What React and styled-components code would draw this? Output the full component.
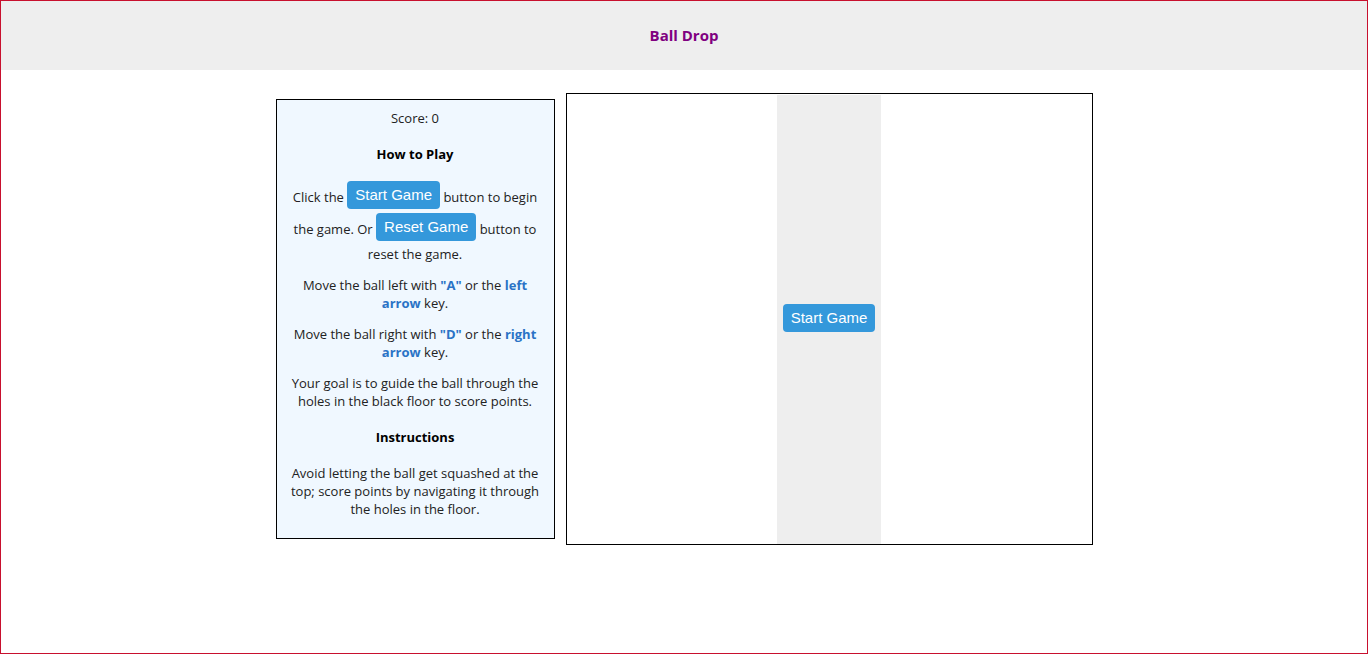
import styled, { createGlobalStyle } from "styled-components";

const GlobalStyle = createGlobalStyle`
  html, body {
    margin: 0;
    padding: 0;
    height: 100%;
  }
  body {
    font-family: "Open Sans", "Noto Sans", sans-serif;
    background: #fff;
  }
`;

function StartButton({ children }) {
  return <Button type="button">{children}</Button>;
}

function App() {
  return (
    <>
      <GlobalStyle />
      <Page>
        <Header>
          <Title>Ball Drop</Title>
        </Header>
        <Main>
          <Panel>
            <Score>Score: 0</Score>
            <Heading>How to Play</Heading>
            <Para>
              Click the <StartButton>Start Game</StartButton> button to begin
              the game. Or <StartButton>Reset Game</StartButton> button to
              reset the game.
            </Para>
            <Para>
              Move the ball left with <Key>"A"</Key> or the{" "}
              <Key>left arrow</Key> key.
            </Para>
            <Para>
              Move the ball right with <Key>"D"</Key> or the{" "}
              <Key>right arrow</Key> key.
            </Para>
            <Para>
              Your goal is to guide the ball through the holes in the black
              floor to score points.
            </Para>
            <Heading>Instructions</Heading>
            <Para>
              Avoid letting the ball get squashed at the top; score points by
              navigating it through the holes in the floor.
            </Para>
          </Panel>
          <Board>
            <Shaft>
              <StartButton>Start Game</StartButton>
            </Shaft>
          </Board>
        </Main>
      </Page>
    </>
  );
}

const Page = styled.div`
  box-sizing: border-box;
  height: 654px;
  border: 1px solid #c8102e;
  display: flex;
  flex-direction: column;
`;

const Header = styled.header`
  box-sizing: border-box;
  height: 69px;
  padding-bottom: 1px;
  background: #eeeeee;
  display: flex;
  align-items: center;
  justify-content: center;
`;

const Title = styled.h1`
  margin: 0;
  font-size: 15px;
  font-weight: 700;
  color: #800080;
`;

const Main = styled.main`
  display: flex;
  justify-content: center;
  align-items: center;
  gap: 11px;
  padding-top: 23px;
`;

const Panel = styled.section`
  box-sizing: border-box;
  width: 279px;
  border: 1px solid #000;
  background: #f0f8ff;
  padding: 9px 14px 20px;
  text-align: center;
  font-size: 13px;
  color: #222;
`;

const Score = styled.p`
  margin: 0 0 18px;
  line-height: 18px;
`;

const Heading = styled.h3`
  margin: 18px 0;
  font-size: 13px;
  line-height: 18px;
  font-weight: 700;
  color: #000;
`;

const Para = styled.p`
  margin: 0 0 13px;
  line-height: 18px;

  &:last-child {
    margin-bottom: 0;
  }
`;

const Key = styled.strong`
  color: #2a73c6;
`;

const Button = styled.button`
  display: inline-block;
  vertical-align: 2px;
  margin: 0 0 4px;
  border: none;
  border-radius: 4px;
  background: #3498db;
  color: #fff;
  font-family: "Liberation Sans", Arial, sans-serif;
  font-size: 15px;
  line-height: 18px;
  padding: 5px 8px;
  cursor: pointer;
`;

const Board = styled.div`
  width: 525px;
  height: 450px;
  border: 1px solid #000;
  display: flex;
  justify-content: center;
`;

const Shaft = styled.div`
  width: 104px;
  margin-top: 1px;
  background: #eeeeee;
  display: flex;
  align-items: center;
  justify-content: center;
`;

export default App;
